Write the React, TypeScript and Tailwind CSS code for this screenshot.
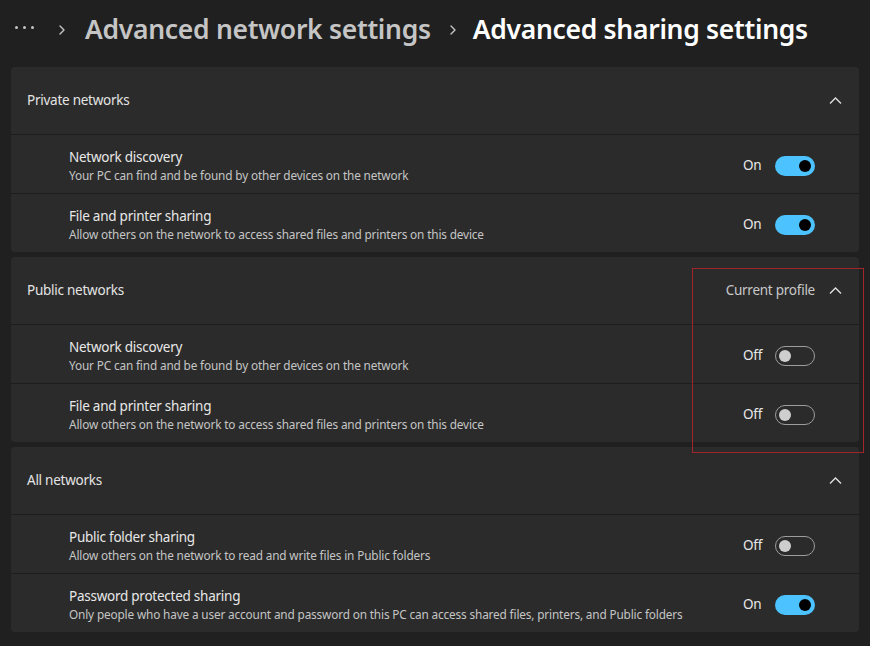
import { ChevronRight } from 'lucide-react';

type Item = { title: string; desc: string; on: boolean };
type Section = { name: string; extra?: string; items: Item[] };

const sections: Section[] = [
  {
    name: 'Private networks',
    items: [
      { title: 'Network discovery', desc: 'Your PC can find and be found by other devices on the network', on: true },
      { title: 'File and printer sharing', desc: 'Allow others on the network to access shared files and printers on this device', on: true },
    ],
  },
  {
    name: 'Public networks',
    extra: 'Current profile',
    items: [
      { title: 'Network discovery', desc: 'Your PC can find and be found by other devices on the network', on: false },
      { title: 'File and printer sharing', desc: 'Allow others on the network to access shared files and printers on this device', on: false },
    ],
  },
  {
    name: 'All networks',
    items: [
      { title: 'Public folder sharing', desc: 'Allow others on the network to read and write files in Public folders', on: false },
      {
        title: 'Password protected sharing',
        desc: 'Only people who have a user account and password on this PC can access shared files, printers, and Public folders',
        on: true,
      },
    ],
  },
];

function Toggle({ on }: { on: boolean }) {
  return on ? (
    <div className="w-10 h-5 rounded-full bg-[#4cc2ff] flex items-center justify-end pr-[4px]">
      <div className="w-3 h-3 rounded-full bg-black" />
    </div>
  ) : (
    <div className="w-10 h-5 rounded-full border border-[#9d9d9d] flex items-center pl-[3px]">
      <div className="w-3 h-3 rounded-full bg-[#cecece]" />
    </div>
  );
}

function Caret() {
  return (
    <svg width="13" height="8" viewBox="0 0 13 8" fill="none">
      <polyline points="1,6.5 6.5,1 12,6.5" stroke="#e2e2e2" strokeWidth="1.3" />
    </svg>
  );
}

export default function App() {
  return (
    <div
      className="w-[870px] h-[646px] bg-[#202020] text-white overflow-hidden relative"
      style={{ fontFamily: '"Noto Sans", "Open Sans", sans-serif' }}
    >
      {/* breadcrumb */}
      <div className="h-[67px] flex items-center pl-[15px] pb-[8px]">
        <div className="flex gap-[5px] items-center mb-[4px]">
          <div className="w-[3px] h-[3px] rounded-full bg-[#c5c5c5]" />
          <div className="w-[3px] h-[3px] rounded-full bg-[#c5c5c5]" />
          <div className="w-[3px] h-[3px] rounded-full bg-[#c5c5c5]" />
        </div>
        <ChevronRight className="w-4 h-4 text-[#c5c5c5] ml-[20px]" strokeWidth={2} />
        <span className="ml-[15px] text-[#c5c5c5] text-[26.5px] font-semibold tracking-[-0.3px]">Advanced network settings</span>
        <ChevronRight className="w-4 h-4 text-[#c5c5c5] ml-[14px]" strokeWidth={2} />
        <span className="ml-[12px] text-white text-[26.5px] font-semibold tracking-[-0.3px]">Advanced sharing settings</span>
      </div>

      <div className="flex flex-col gap-[5px] pl-[11px] pr-[11px]">
        {sections.map((s) => (
          <div key={s.name} className="bg-[#2b2b2b] rounded-[4px] overflow-hidden">
            <div className="h-[68px] flex items-center pl-[16px] pr-[17px] border-b border-[#1d1d1d]">
              <span className="text-[13.5px] text-[#e4e4e4] tracking-[-0.25px]">{s.name}</span>
              <div className="ml-auto flex items-center">
                {s.extra && <span className="text-[13.5px] text-[#c8c8c8] mr-[14px] tracking-[-0.25px]">{s.extra}</span>}
                <Caret />
              </div>
            </div>
            {s.items.map((it, i) => (
              <div
                key={it.title}
                className={`flex items-center pl-[58px] pr-[44px] pt-[3px] ${i === 0 ? 'h-[59px] border-b border-[#1d1d1d]' : 'h-[58px]'}`}
              >
                <div className="flex flex-col">
                  <span className="text-[13.5px] leading-[19px] text-[#e8e8e8] tracking-[-0.25px]">{it.title}</span>
                  <span className="text-[11.8px] leading-[16px] text-[#c5c5c5] tracking-[-0.15px]">{it.desc}</span>
                </div>
                <div className="ml-auto flex items-center">
                  <span className="text-[13.5px] text-[#e8e8e8] mr-[10px] w-[22px] tracking-[-0.2px]">{it.on ? 'On' : 'Off'}</span>
                  <Toggle on={it.on} />
                </div>
              </div>
            ))}
          </div>
        ))}
      </div>

      {/* highlight frame */}
      <div className="absolute left-[692px] top-[268px] w-[172px] h-[185px] border border-[#a1262b]" />
    </div>
  );
}
